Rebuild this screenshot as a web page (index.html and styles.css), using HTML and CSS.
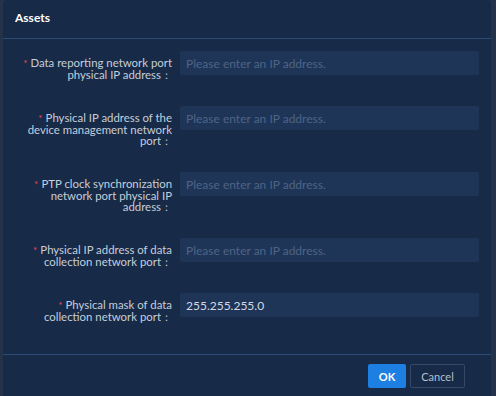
FILE: index.html
```html
<!DOCTYPE html>
<html lang="en">
<head>
    <meta charset="UTF-8">
    <title>Assets</title>
    <link rel="stylesheet" href="styles.css">
</head>
<body>
    <div class="modal">
        <div class="modal-header">Assets</div>

        <div class="modal-body">
            <div class="form-item">
                <label class="form-label"><span class="req">*</span>Data reporting network port physical IP address：</label>
                <input class="form-input" type="text" placeholder="Please enter an IP address.">
            </div>

            <div class="form-item">
                <label class="form-label"><span class="req">*</span>Physical IP address of the device management network port：</label>
                <input class="form-input" type="text" placeholder="Please enter an IP address.">
            </div>

            <div class="form-item">
                <label class="form-label"><span class="req">*</span>PTP clock synchronization network port physical IP address：</label>
                <input class="form-input" type="text" placeholder="Please enter an IP address.">
            </div>

            <div class="form-item">
                <label class="form-label"><span class="req">*</span>Physical IP address of data collection network port：</label>
                <input class="form-input" type="text" placeholder="Please enter an IP address.">
            </div>

            <div class="form-item">
                <label class="form-label"><span class="req">*</span>Physical mask of data collection network port：</label>
                <input class="form-input" type="text" value="255.255.255.0">
            </div>
        </div>

        <div class="modal-footer">
            <button class="btn btn-primary">OK</button>
            <button class="btn btn-default">Cancel</button>
        </div>
    </div>
</body>
</html>
```

FILE: styles.css
```css
body {
    margin: 0;
    padding: 0;
    background-color: #24334a;
    font-family: Lato, "Noto Sans", Arial, sans-serif;
    overflow: hidden;
    height: 396px;
}

.modal {
    margin-left: 3px;
    width: 488px;
    height: 396px;
    background-color: #172a47;
    border-radius: 4px 4px 0 0;
    display: flex;
    flex-direction: column;
}

.modal-header {
    height: 38px;
    line-height: 36px;
    padding-left: 12px;
    color: #ffffff;
    font-size: 12px;
    font-weight: bold;
    border-bottom: 1px solid #2c4b76;
}

.modal-body {
    height: 303px;
    padding-top: 12px;
    border-bottom: 1px solid #2c4b76;
}

.form-item {
    display: flex;
    align-items: flex-start;
    padding-left: 15px;
    margin-bottom: 26px;
}

.form-label {
    width: 154px;
    flex-shrink: 0;
    padding-top: 6px;
    margin-right: 8px;
    text-align: right;
    color: #c5cedb;
    font-size: 11.4px;
    line-height: 11px;
}

.req {
    color: #e8455d;
    margin-right: 3px;
    font-size: 10px;
}

.form-input {
    width: 299px;
    height: 24px;
    box-sizing: border-box;
    padding: 0 6px;
    border: none;
    border-radius: 2px;
    background-color: #1f3557;
    color: #d3dae5;
    font-family: inherit;
    font-size: 12px;
    outline: none;
}

.form-input::placeholder {
    color: #4e6486;
}

.modal-footer {
    display: flex;
    justify-content: flex-end;
    padding: 9px 26px 0 0;
}

.btn {
    height: 24px;
    font-family: inherit;
    font-size: 11px;
    border-radius: 2px;
    cursor: pointer;
}

.btn-primary {
    width: 38px;
    background-color: #1e7fe2;
    color: #ffffff;
    font-weight: bold;
    border: none;
    margin-right: 4px;
}

.btn-default {
    width: 55px;
    background-color: transparent;
    color: #b4bfcd;
    border: 1px solid #34496a;
}
```
